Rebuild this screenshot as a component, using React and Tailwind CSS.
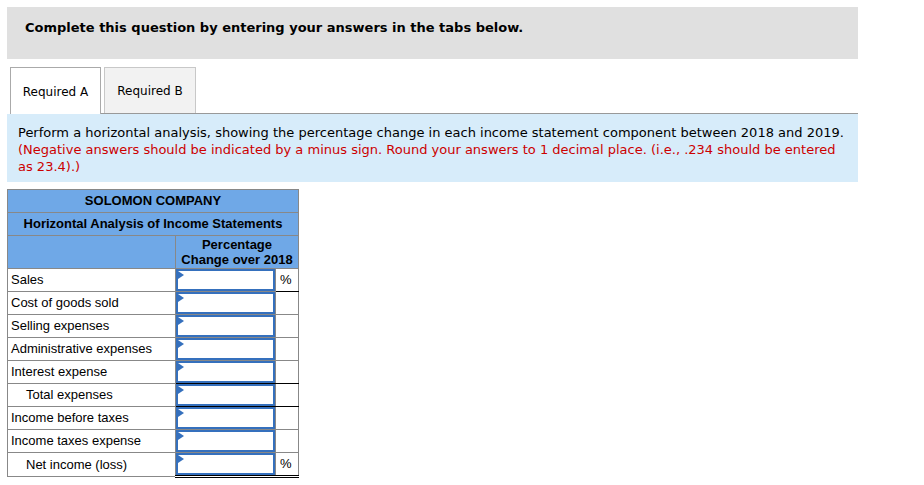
import React from 'react';

const rows = [
  { label: 'Sales', pct: true, pctEdge: 'black' },
  { label: 'Cost of goods sold' },
  { label: 'Selling expenses' },
  { label: 'Administrative expenses' },
  { label: 'Interest expense', edge: 'black' },
  { label: 'Total expenses', indent: true, edge: 'black' },
  { label: 'Income before taxes' },
  { label: 'Income taxes expense' },
  { label: 'Net income (loss)', indent: true, pct: true, edge: 'double' },
];

const AnswerBox = () => (
  <div className="relative h-[22px] w-full border-2 border-[#3570bd] bg-white">
    <span className="absolute left-0 top-0 h-0 w-0 border-y-[4px] border-l-[6px] border-y-transparent border-l-[#3570bd]" />
  </div>
);

const App = () => {
  return (
    <div className="w-[924px] bg-white px-[7px] pt-[7px] text-black">
      {/* Top banner */}
      <div className="h-[52px] w-[851px] bg-[#e0e0e0] pl-[18px] pt-[12px] font-['DejaVu_Sans',sans-serif] text-[13px] font-bold leading-[17px]">
        Complete this question by entering your answers in the tabs below.
      </div>

      {/* Tabs */}
      <div className="mt-[8px] flex w-[851px] items-end font-['DejaVu_Sans',sans-serif] text-[12px]">
        <div className="ml-[3px] flex h-[47px] w-[91px] items-center justify-center border border-b-0 border-[#aaa] bg-white pt-[1px]">
          Required A
        </div>
        <div className="flex-1 self-stretch border-b border-[#999]">
          <div className="ml-[3px] flex h-[46px] w-[92px] items-center justify-center border border-b-0 border-[#c8c8c8] bg-[#f2f2f2] pt-[1px]">
            Required B
          </div>
        </div>
      </div>

      {/* Instructions */}
      <div className="w-[851px] bg-[#d7ecfa] px-[11px] pb-[7px] pt-[10px] font-['DejaVu_Sans',sans-serif] text-[13px] leading-[17px]">
        <p>
          Perform a horizontal analysis, showing the percentage change in each income statement component between 2018 and 2019.
        </p>
        <p className="text-[#cc0000]">
          (Negative answers should be indicated by a minus sign. Round your answers to 1 decimal place. (i.e., .234 should be entered as 23.4).)
        </p>
      </div>

      {/* Table */}
      <table className="mt-[7px] border-collapse font-['Liberation_Sans',Arial,sans-serif] text-[13px]">
        <colgroup>
          <col className="w-[168px]" />
          <col className="w-[100px]" />
          <col className="w-[23px]" />
        </colgroup>
        <tbody>
          <tr className="h-[23px] bg-[#6fa8e7]">
            <td colSpan={3} className="border border-[#888] text-center font-bold">SOLOMON COMPANY</td>
          </tr>
          <tr className="h-[23px] bg-[#6fa8e7]">
            <td colSpan={3} className="border border-[#888] text-center font-bold">Horizontal Analysis of Income Statements</td>
          </tr>
          <tr className="h-[33px] bg-[#6fa8e7]">
            <td className="border border-[#888]" />
            <td colSpan={2} className="border border-[#888] text-center font-bold leading-[15px]">
              Percentage
              <br />
              Change over 2018
            </td>
          </tr>
          {rows.map((r) => {
            const edge =
              r.edge === 'black'
                ? 'border-b-black'
                : r.edge === 'double'
                ? 'border-b-[3px] border-b-black border-double'
                : '';
            return (
              <tr key={r.label} className="h-[23px]">
                <td className={`border border-[#888] pb-[1px] leading-[15px] ${r.indent ? 'pl-[18px]' : 'pl-[3px]'}`}>
                  {r.label}
                </td>
                <td className={`border border-[#888] p-0 align-top ${edge}`}>
                  <AnswerBox />
                </td>
                <td className={`border border-[#888] pb-[1px] pl-[4px] ${r.pctEdge === 'black' ? 'border-b-black' : ''} ${edge}`}>
                  {r.pct ? '%' : ''}
                </td>
              </tr>
            );
          })}
        </tbody>
      </table>
      <div className="h-[10px]" />
    </div>
  );
};

export default App;
